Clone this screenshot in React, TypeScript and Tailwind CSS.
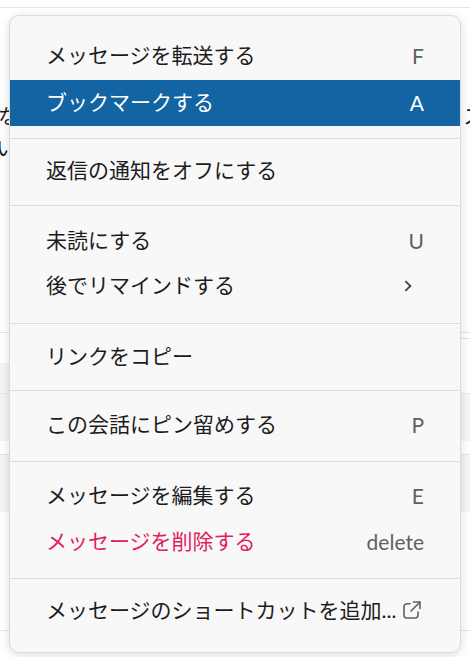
const FONT = "font-['Lato','Noto_Sans_CJK_JP',sans-serif]";

type RowProps = { label: string; hint?: string; active?: boolean; danger?: boolean; tight?: boolean; children?: React.ReactNode };

function Row({ label, hint, active, danger, tight, children }: RowProps) {
  return (
    <div className={`flex h-[46px] items-center justify-between pl-[36px] pr-[36px] text-[21px] ${tight ? "mt-[-1px]" : ""} ${active ? "bg-[#1264a3] text-white" : danger ? "text-[#e01e5a]" : "text-[#1d1c1d]"}`}>
      <span className="mb-[2px] whitespace-nowrap">{label}</span>
      {hint && <span className={`text-[21px] ${active ? "text-white" : "text-[#616061]"}`}>{hint}</span>}
      {children}
    </div>
  );
}

function Divider({ className }: { className: string }) {
  return <div className={`h-px bg-[#dddddd] ${className}`} />;
}

export default function App() {
  return (
    <div className={`relative h-[657px] w-[470px] overflow-hidden bg-white ${FONT}`}>
      {/* Conversation behind the menu */}
      <div className="flex flex-col">
        <div className="mt-[7px] h-px bg-[#e4e4e4]" />
        <div className="mt-[92px] flex justify-between text-[20.8px] leading-[32px] text-[#1d1c1d]">
          <span className="ml-[-2px]">な</span>
          <span className="mr-[-14px]">ス</span>
        </div>
        <div className="text-[20.8px] leading-[32px] text-[#1d1c1d]">
          <span className="ml-[-4px]">い</span>
        </div>
        <div className="mt-[168px] h-px bg-[#e4e4e4]" />
        <div className="ml-auto mt-[5px] h-px w-[12px] bg-[#e4e4e4]" />
        <div className="mt-[24px] h-[30px] w-[12px] bg-[#f4f4f4]" />
        <div className="h-[48px] border-t border-[#e8e8e8] bg-[#f4f4f4]" />
        <div className="mt-[13px] h-px bg-[#e4e4e4]" />
        <div className="h-[57px] bg-[#f4f4f4]" />
        <div className="mt-[118px] h-px bg-[#e4e4e4]" />
      </div>

      {/* Actions menu */}
      <div className="absolute left-[9px] top-[15px] h-[638px] w-[452px] overflow-hidden rounded-[10px] border border-[#dcdcdc] bg-[#f8f8f8] shadow-[0_2px_10px_rgba(0,0,0,0.14)]">
        <div className="pt-[17px]">
          <Row label="メッセージを転送する" hint="F" />
          <div className="h-px" />
          <Row label="ブックマークする" hint="A" active />
        </div>
        <Divider className="mt-[12px]" />
        <div className="pt-[9px]">
          <Row label="返信の通知をオフにする" />
        </div>
        <Divider className="mt-[11px]" />
        <div className="pt-[12px]">
          <Row label="未読にする" hint="U" />
          <Row label="後でリマインドする" tight>
            <svg viewBox="0 0 10 10" className="mr-[10px] h-[12px] w-[12px] text-[#454245]" fill="none" stroke="currentColor" strokeWidth="1.5">
              <path d="M2.8 1 7 5 2.8 9" />
            </svg>
          </Row>
        </div>
        <Divider className="mt-[14px]" />
        <div className="pt-[10px]">
          <Row label="リンクをコピー" />
        </div>
        <Divider className="mt-[10px]" />
        <div className="pt-[11px]">
          <Row label="この会話にピン留めする" hint="P" />
        </div>
        <Divider className="mt-[13px]" />
        <div className="pt-[11px]">
          <Row label="メッセージを編集する" hint="E" />
          <Row label="メッセージを削除する" hint="delete" danger />
        </div>
        <Divider className="mt-[13px]" />
        <div className="pt-[9px]">
          <Row label="メッセージのショートカットを追加...">
            <svg viewBox="0 0 18 18" className="mb-[2px] mr-[3px] h-[18px] w-[18px] shrink-0 text-[#616061]" fill="none" stroke="currentColor" strokeWidth="1.6" strokeLinecap="round" strokeLinejoin="round">
              <path d="M7 2.8H4a3 3 0 0 0-3 3V14a3 3 0 0 0 3 3h8a3 3 0 0 0 3-3v-3" />
              <path d="M10.5 1h6.5v6.5" />
              <path d="M16.8 1.2 8 10" />
            </svg>
          </Row>
        </div>
      </div>
    </div>
  );
}
